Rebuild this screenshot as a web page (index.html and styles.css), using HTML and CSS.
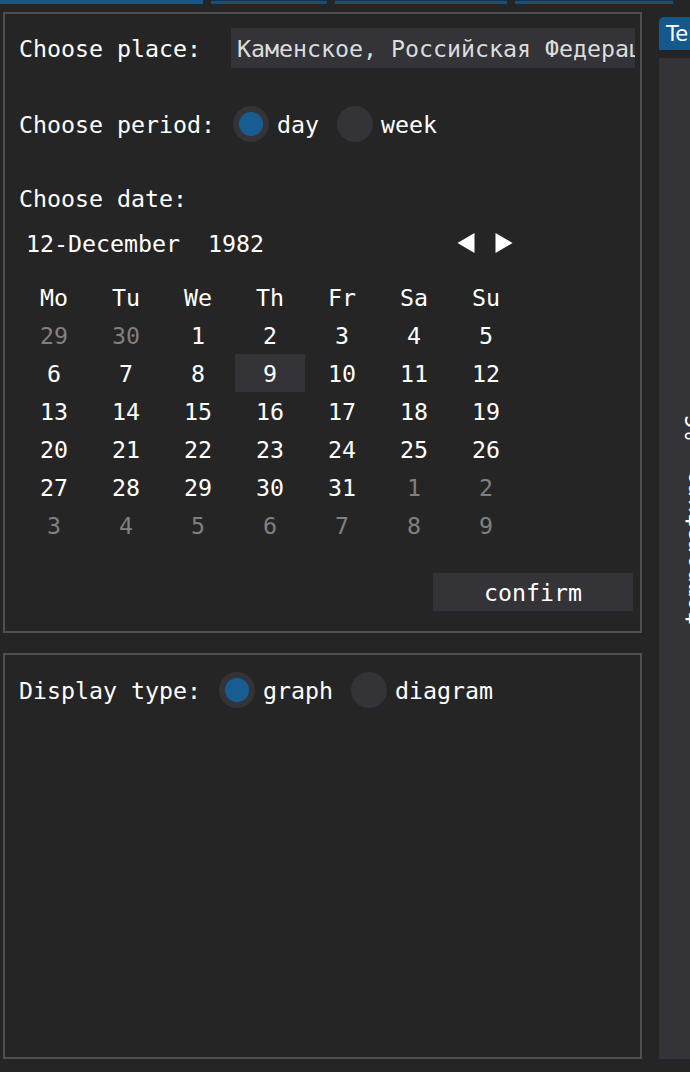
FILE: index.html
```html
<!DOCTYPE html>
<html lang="ru">
<head>
<meta charset="utf-8">
<title>Weather</title>
<link rel="stylesheet" href="styles.css">
</head>
<body>
<div class="topbar">
  <span class="seg seg-active seg-1"></span>
  <span class="seg seg-2"></span>
  <span class="seg seg-3"></span>
  <span class="seg seg-4"></span>
</div>
<div class="main">
  <div class="left">
    <section class="panel panel-top">
      <div class="row row-place">
        <span class="label label-place">Choose place:</span>
        <div class="input">Каменское, Российская Федерация</div>
      </div>
      <div class="row row-period">
        <span class="label">Choose period:</span>
        <span class="radio on"></span><span class="opt">day</span>
        <span class="radio"></span><span class="opt">week</span>
      </div>
      <div class="row row-datelabel">
        <span class="label">Choose date:</span>
      </div>
      <div class="row row-month">
        <span class="month">12-December  1982</span>
        <div class="arrows">
          <svg class="arrow" width="18" height="20" viewBox="0 0 18 20"><polygon points="0.5,10 17.5,0 17.5,20" fill="#ffffff"/></svg>
          <svg class="arrow" width="18" height="20" viewBox="0 0 18 20"><polygon points="0.5,0 0.5,20 17.5,10" fill="#ffffff"/></svg>
        </div>
      </div>
      <div class="cal">
        <span class="wd">Mo</span><span class="wd">Tu</span><span class="wd">We</span><span class="wd">Th</span><span class="wd">Fr</span><span class="wd">Sa</span><span class="wd">Su</span>
        <span class="d dim">29</span><span class="d dim">30</span><span class="d">1</span><span class="d">2</span><span class="d">3</span><span class="d">4</span><span class="d">5</span>
        <span class="d">6</span><span class="d">7</span><span class="d">8</span><span class="d sel">9</span><span class="d">10</span><span class="d">11</span><span class="d">12</span>
        <span class="d">13</span><span class="d">14</span><span class="d">15</span><span class="d">16</span><span class="d">17</span><span class="d">18</span><span class="d">19</span>
        <span class="d">20</span><span class="d">21</span><span class="d">22</span><span class="d">23</span><span class="d">24</span><span class="d">25</span><span class="d">26</span>
        <span class="d">27</span><span class="d">28</span><span class="d">29</span><span class="d">30</span><span class="d">31</span><span class="d dim">1</span><span class="d dim">2</span>
        <span class="d dim">3</span><span class="d dim">4</span><span class="d dim">5</span><span class="d dim">6</span><span class="d dim">7</span><span class="d dim">8</span><span class="d dim">9</span>
      </div>
      <div class="actions">
        <button class="btn" type="button">confirm</button>
      </div>
    </section>
    <section class="panel panel-bottom">
      <div class="row row-display">
        <span class="label">Display type:</span>
        <span class="radio on"></span><span class="opt">graph</span>
        <span class="radio"></span><span class="opt">diagram</span>
      </div>
    </section>
  </div>
  <div class="right">
    <div class="tab">Temperature</div>
    <div class="plot">
      <span class="axis-label">temperature, °C</span>
    </div>
  </div>
</div>
</body>
</html>
```

FILE: styles.css
```css
* {
  box-sizing: border-box;
  margin: 0;
  padding: 0;
}

html,
body {
  width: 690px;
  height: 1072px;
  overflow: hidden;
}

body {
  background: #252525;
  color: #ffffff;
  font-family: "DejaVu Sans Mono", "Liberation Mono", monospace;
  font-size: 23.25px;
  line-height: normal;
}

/* top tab strip */
.topbar {
  display: flex;
  gap: 8px;
  height: 4px;
}

.seg {
  display: block;
  height: 4px;
  background: #174e7a;
  border-top: 1px solid #1b2f44;
}

.seg-active {
  background: #15598c;
  border-top: 0;
}

.seg-1 { width: 203px; }
.seg-2 { width: 116px; }
.seg-3 { width: 172px; }
.seg-4 { width: 158px; }

/* main layout */
.main {
  display: flex;
  align-items: flex-start;
  padding-left: 3px;
  gap: 17px;
}

.left {
  display: flex;
  flex-direction: column;
  flex: 0 0 639px;
  margin-top: 8px;
  gap: 20px;
}

.panel {
  display: flex;
  flex-direction: column;
  border: 2px solid #4f4f4f;
  padding: 0 5px 0 14px;
}

.panel-top {
  height: 621px;
  padding-top: 14px;
}

.panel-bottom {
  height: 406px;
  padding-top: 15px;
}

.row {
  display: flex;
  align-items: center;
  height: 40px;
  white-space: pre;
}

.label-place {
  width: 212px;
}

.input {
  display: flex;
  align-items: center;
  width: 404px;
  height: 40px;
  padding-left: 6px;
  background: #333338;
  color: #dcdcdc;
  overflow: hidden;
  white-space: nowrap;
}

.row-period {
  margin-top: 36px;
}

.radio {
  flex: 0 0 36px;
  width: 36px;
  height: 36px;
  margin-left: 18px;
  border-radius: 50%;
  background: #333338;
}

.radio.on {
  background: radial-gradient(circle closest-side, #175d92 0, #175d92 11.5px, #333338 12.5px);
}

.opt {
  margin-left: 8px;
}

.row-datelabel {
  margin-top: 34px;
}

.row-month {
  margin-top: 5px;
  padding-left: 7px;
}

.month {
  width: 431px;
}

.arrows {
  display: flex;
  align-items: center;
  gap: 20px;
}

.arrow {
  display: block;
}

/* calendar */
.cal {
  display: grid;
  grid-template-columns: repeat(7, 70px);
  grid-auto-rows: 38px;
  column-gap: 2px;
  margin-top: 15px;
}

.wd,
.d {
  display: flex;
  align-items: center;
  justify-content: center;
}

.dim {
  color: #808080;
}

.sel {
  background: #333338;
}

.actions {
  display: flex;
  justify-content: flex-end;
  margin-top: 29px;
  padding-right: 2px;
}

.btn {
  width: 200px;
  height: 38px;
  border: 0;
  background: #333338;
  color: #ffffff;
  font: inherit;
}

/* right plot window */
.right {
  display: flex;
  flex-direction: column;
  flex: 0 0 300px;
  margin-top: 13px;
  gap: 8px;
}

.tab {
  display: flex;
  align-items: center;
  width: 180px;
  height: 33px;
  padding-left: 7px;
  border-radius: 5px 5px 0 0;
  background: #15598c;
  font-family: "DejaVu Sans", sans-serif;
  font-size: 21px;
  white-space: nowrap;
}

.plot {
  display: flex;
  align-items: flex-start;
  height: 1001px;
  padding: 357px 0 0 21px;
  background: #333338;
}

.axis-label {
  writing-mode: vertical-rl;
  transform: rotate(180deg);
  white-space: nowrap;
}
```
